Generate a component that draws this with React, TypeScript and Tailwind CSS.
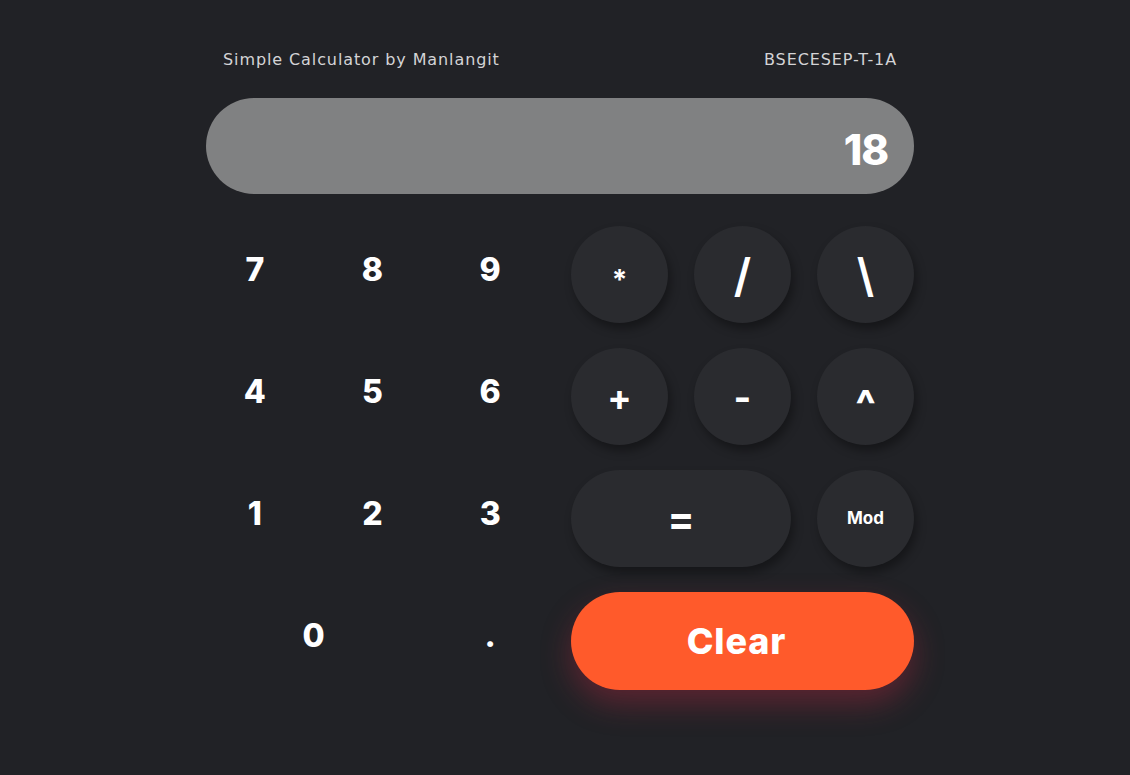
import React from 'react'

const digits = [
  { label: '7', span: '' },
  { label: '8', span: '' },
  { label: '9', span: '' },
  { label: '4', span: '' },
  { label: '5', span: '' },
  { label: '6', span: '' },
  { label: '1', span: '' },
  { label: '2', span: '' },
  { label: '3', span: '' },
  { label: '0', span: 'col-span-2' },
  { label: '.', span: '' },
]

const ops = [
  { label: '*', cls: 'text-[28px] font-bold pt-[10px]' },
  { label: '/', cls: 'text-[46px] font-semibold' },
  { label: '\\', cls: 'text-[46px] font-semibold' },
  { label: '+', cls: 'text-[36px] font-bold' },
  { label: '-', cls: 'text-[38px] font-bold' },
  { label: '^', cls: 'text-[42px] font-extrabold pt-[16px]' },
]

export default function App() {
  return (
    <div className="min-h-screen w-full bg-[#212226] flex justify-center pr-[10px] font-['Inter','Open_Sans',sans-serif] text-white">
      <div className="w-[708px] pt-[48px]">
        {/* Header */}
        <div className="flex justify-between px-[17px] font-['DejaVu_Sans',sans-serif] text-[16px] tracking-[0.9px] leading-[24px] text-[#d4d4d6]">
          <span>Simple Calculator by Manlangit</span>
          <span>BSECESEP-T-1A</span>
        </div>

        {/* Display */}
        <div className="mt-[26px] h-[96px] rounded-full bg-[#808182] flex items-center justify-end pr-[26px] pt-[8px]">
          <span className="text-[42px] font-extrabold leading-none tracking-tight">18</span>
        </div>

        {/* Keypad */}
        <div className="mt-[32px] flex">
          <div className="-ml-[10px] w-[354px] grid grid-cols-3 auto-rows-[97px] gap-y-[25px]">
            {digits.map((d) => (
              <button
                key={d.label}
                className={`${d.span} flex items-center justify-center pb-[10px] text-[32px] font-extrabold leading-none`}
              >
                {d.label}
              </button>
            ))}
          </div>

          <div className="ml-[22px] grid grid-cols-[97px_97px_97px] auto-rows-[97px] gap-x-[26px] gap-y-[25px]">
            {ops.map((o) => (
              <button
                key={o.label}
                className={`${o.cls} w-[97px] h-[97px] rounded-full bg-[#2a2b2f] shadow-[3px_6px_10px_rgba(0,0,0,0.35)] flex items-center justify-center leading-none`}
              >
                {o.label}
              </button>
            ))}
            <button className="col-span-2 h-[97px] rounded-full bg-[#2a2b2f] shadow-[3px_6px_10px_rgba(0,0,0,0.35)] flex items-center justify-center text-[40px] font-bold leading-none">
              =
            </button>
            <button className="w-[97px] h-[97px] rounded-full bg-[#2a2b2f] shadow-[3px_6px_10px_rgba(0,0,0,0.35)] flex items-center justify-center text-[17px] font-bold leading-none">
              Mod
            </button>
            <button className="col-span-3 h-[98px] rounded-full bg-[#ff5a2b] shadow-[0_14px_30px_rgba(200,40,70,0.35)] flex items-center justify-center pr-[12px] text-[36px] font-extrabold tracking-wide leading-none">
              Clear
            </button>
          </div>
        </div>
      </div>
    </div>
  )
}
